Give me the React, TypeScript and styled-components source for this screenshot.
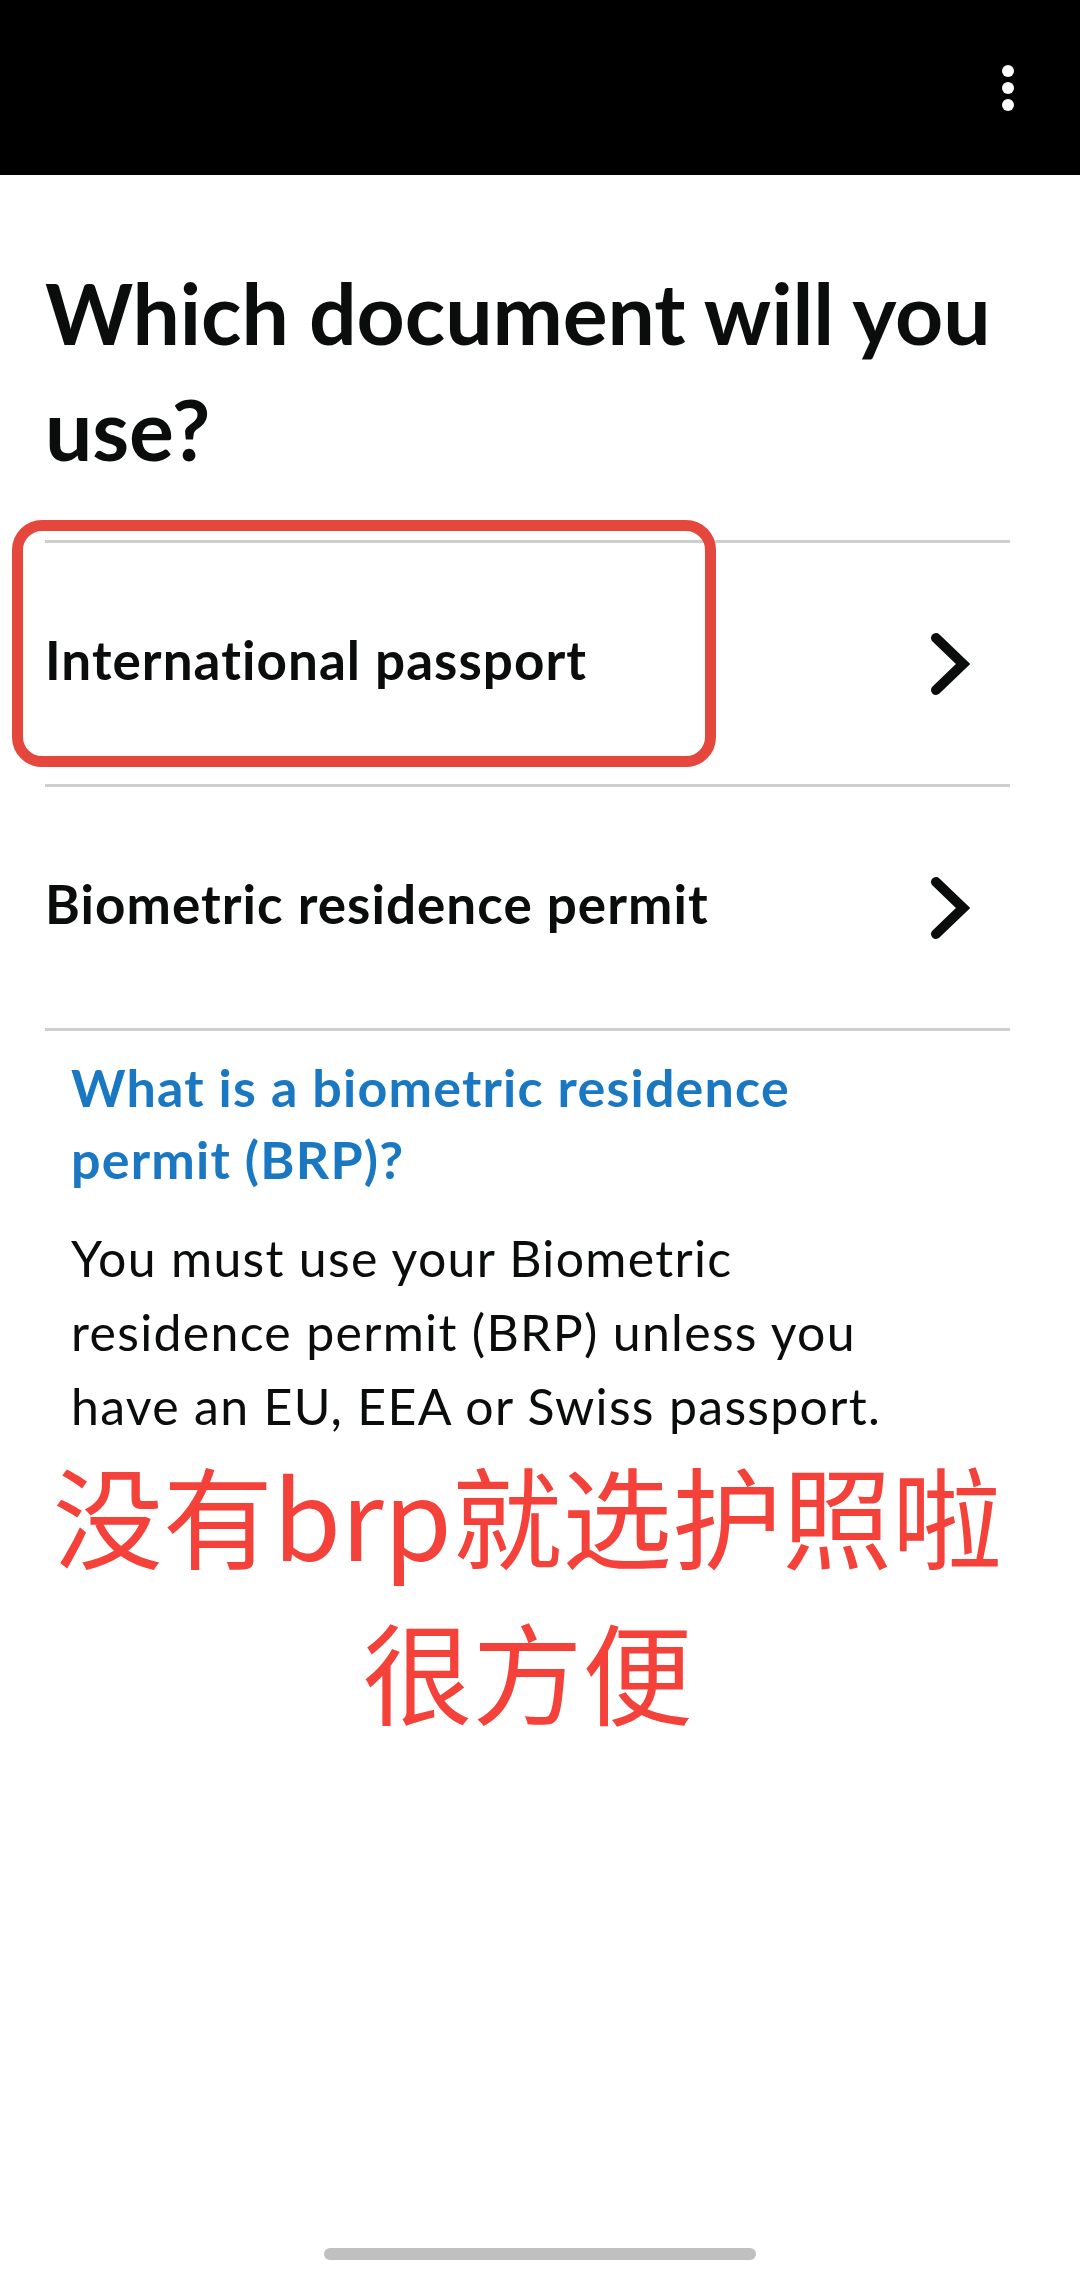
import React from "react";
import styled, { createGlobalStyle } from "styled-components";

const GlobalStyle = createGlobalStyle`
  html, body {
    margin: 0;
    padding: 0;
    background: #ffffff;
  }
  body {
    font-family: Lato, "Noto Sans", "Noto Sans CJK SC", sans-serif;
    color: #0b0c0c;
  }
  * { box-sizing: border-box; }
`;

const Screen = styled.div`
  width: 1080px;
  min-height: 2282px;
  display: flex;
  flex-direction: column;
  background: #ffffff;
`;

const TopBar = styled.header`
  height: 175px;
  background: #000000;
  display: flex;
  justify-content: flex-end;
  align-items: center;
  padding-right: 60px;
`;

const MenuButton = styled.div`
  width: 24px;
  height: 50px;
  display: flex;
  align-items: center;
  justify-content: center;
`;

const Content = styled.main`
  padding: 0 70px 0 45px;
  display: flex;
  flex-direction: column;
`;

const Heading = styled.h1`
  margin: 80px 0 53px 0;
  font-family: Lato, "Noto Sans", sans-serif;
  font-weight: 700;
  font-size: 84px;
  line-height: 116px;
  letter-spacing: -0.1px;
  color: #0b0c0c;
`;

const OptionList = styled.ul`
  list-style: none;
  margin: 0;
  padding: 0;
  border-bottom: 3px solid #cfcfcf;
`;

const OptionRow = styled.li`
  position: relative;
  height: 244px;
  border-top: 3px solid #cfcfcf;
  display: flex;
  align-items: center;
  justify-content: space-between;
  padding-right: 40px;
`;

const OptionLabel = styled.span`
  font-family: Lato, "Noto Sans", sans-serif;
  font-weight: 700;
  font-size: 53px;
  letter-spacing: 1.05px;
  color: #0b0c0c;
  margin-bottom: 8px;
`;

const Highlight = styled.div`
  position: absolute;
  top: -23px;
  left: -33px;
  width: 704px;
  height: 247px;
  border: 11px solid #e6473c;
  border-radius: 30px;
  pointer-events: none;
`;

const Details = styled.section`
  padding-left: 26px;
  padding-top: 20px;
`;

const DetailsSummary = styled.h2`
  margin: 0;
  font-family: Lato, "Noto Sans", sans-serif;
  font-weight: 700;
  font-size: 52px;
  line-height: 72px;
  letter-spacing: 1.2px;
  color: #1a78c2;
`;

const DetailsBody = styled.p`
  margin: 26px 0 0 0;
  font-family: Lato, "Noto Sans", sans-serif;
  font-weight: 400;
  font-size: 50px;
  line-height: 74px;
  letter-spacing: 1.3px;
  color: #0b0c0c;
`;

const Annotation = styled.div`
  margin-top: -8px;
  text-align: center;
  font-family: "Noto Sans CJK SC", "Noto Sans", sans-serif;
  font-size: 110px;
  line-height: 156px;
  color: #f4413a;
  white-space: nowrap;
`;

const BottomArea = styled.div`
  margin-top: auto;
  display: flex;
  justify-content: center;
  padding-bottom: 22px;
`;

const HomeIndicator = styled.div`
  width: 432px;
  height: 12px;
  border-radius: 6px;
  background: #c0c0c0;
`;

const Kebab = () => (
  <svg width="14" height="50" viewBox="0 0 14 50">
    <circle cx="7" cy="8" r="6" fill="#ffffff" />
    <circle cx="7" cy="25" r="6" fill="#ffffff" />
    <circle cx="7" cy="42" r="6" fill="#ffffff" />
  </svg>
);

const Chevron = () => (
  <svg width="40" height="64" viewBox="0 0 40 64">
    <polyline
      points="6,6 33,32 6,58"
      fill="none"
      stroke="#0b0c0c"
      strokeWidth="10"
      strokeLinejoin="miter"
      strokeLinecap="round"
    />
  </svg>
);

const options = ["International passport", "Biometric residence permit"];

export default function App() {
  return (
    <>
      <GlobalStyle />
      <Screen>
        <TopBar>
          <MenuButton>
            <Kebab />
          </MenuButton>
        </TopBar>
        <Content>
          <Heading>
            Which document will you
            <br />
            use?
          </Heading>
          <OptionList>
            {options.map((label, i) => (
              <OptionRow key={label}>
                {i === 0 && <Highlight />}
                <OptionLabel>{label}</OptionLabel>
                <Chevron />
              </OptionRow>
            ))}
          </OptionList>
          <Details>
            <DetailsSummary>
              What is a biometric residence
              <br />
              permit (BRP)?
            </DetailsSummary>
            <DetailsBody>
              You must use your Biometric
              <br />
              residence permit (BRP) unless you
              <br />
              have an EU, EEA or Swiss passport.
            </DetailsBody>
          </Details>
          <Annotation>
            没有brp就选护照啦
            <br />
            很方便
          </Annotation>
        </Content>
        <BottomArea>
          <HomeIndicator />
        </BottomArea>
      </Screen>
    </>
  );
}
